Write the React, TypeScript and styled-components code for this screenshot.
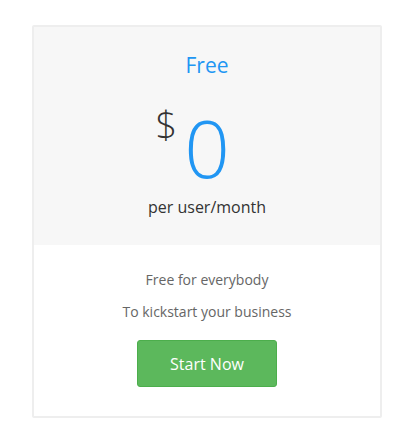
import React from "react";
import styled, { createGlobalStyle } from "styled-components";

const Global = createGlobalStyle`
  body { margin: 0; background: #fff; font-family: "Open Sans", sans-serif; }
`;

const Page = styled.div`
  padding: 25px 26px 24px 32px;
`;

const Card = styled.div`
  width: 350px;
  box-sizing: border-box;
  border: 2px solid #eeeeee;
  border-radius: 2px;
  background: #fff;
  text-align: center;
`;

const Header = styled.div`
  background: #f7f7f7;
  padding-top: 22px;
  height: 218px;
  box-sizing: border-box;
`;

const Title = styled.div`
  color: #2196f3;
  font-size: 21px;
  line-height: 32px;
`;

const PriceRow = styled.div`
  display: flex;
  justify-content: center;
  margin-top: 26px;
`;

const PriceWrap = styled.div`
  position: relative;
`;

const Currency = styled.span`
  position: absolute;
  top: -2px;
  right: calc(100% + 7px);
  font-size: 38px;
  font-weight: 300;
  color: #333;
  line-height: 38px;
`;

const Amount = styled.span`
  display: block;
  font-size: 80px;
  font-weight: 300;
  color: #2196f3;
  line-height: 80px;
`;

const Per = styled.div`
  font-size: 16px;
  color: #333;
  line-height: 22px;
  margin-top: 9px;
`;

const Body = styled.div`
  padding: 25px 0 29px;
  display: flex;
  flex-direction: column;
  align-items: center;
`;

const Line = styled.div`
  font-size: 14px;
  color: #666;
  line-height: 20px;
  margin-bottom: 12px;
`;

const Button = styled.button`
  margin-top: 6px;
  width: 140px;
  height: 47px;
  background: #5cb85c;
  border: 1px solid #4cae4c;
  border-radius: 3px;
  color: #fff;
  font-family: "Open Sans", sans-serif;
  font-size: 16px;
  cursor: pointer;
`;

export default function App() {
  return (
    <>
      <Global />
      <Page>
        <Card>
          <Header>
            <Title>Free</Title>
            <PriceRow>
              <PriceWrap>
                <Currency>$</Currency>
                <Amount>0</Amount>
              </PriceWrap>
            </PriceRow>
            <Per>per user/month</Per>
          </Header>
          <Body>
            <Line>Free for everybody</Line>
            <Line>To kickstart your business</Line>
            <Button>Start Now</Button>
          </Body>
        </Card>
      </Page>
    </>
  );
}
